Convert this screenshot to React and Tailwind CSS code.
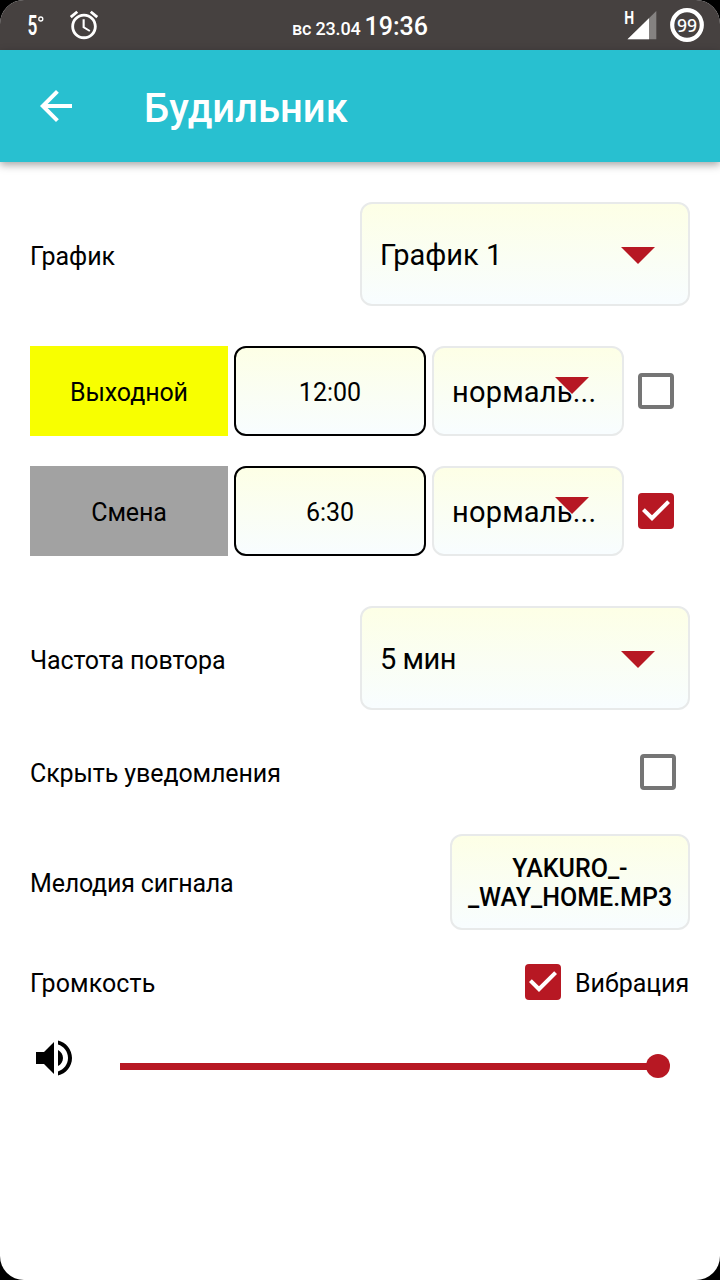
import { useState } from 'react'

const shifts = [
  { id: 1, name: 'Выходной', time: '12:00', mode: 'нормаль...', enabled: false, color: 'bg-[#f8ff00]' },
  { id: 2, name: 'Смена', time: '6:30', mode: 'нормаль...', enabled: true, color: 'bg-[#a2a2a2]' },
]

const panel = 'rounded-xl border-2 border-[#e8eaea] bg-linear-to-b from-[#fdffe6] to-[#f8fdff]'

function Triangle({ className }) {
  return (
    <svg viewBox="0 0 34 17" className={`h-[17px] w-[34px] shrink-0 ${className}`} fill="#b71823">
      <path d="M0 0h34L17 17z" />
    </svg>
  )
}

function Checkbox({ checked, onChange, label }) {
  return (
    <button
      role="checkbox"
      aria-checked={checked}
      aria-label={label}
      onClick={() => onChange(!checked)}
      className={`size-9 shrink-0 rounded-sm ${checked ? 'bg-[#b71823]' : 'border-4 border-[#757575]'}`}
    >
      {checked && (
        <svg viewBox="3 3 18 18" className="size-9" fill="#fff">
          <path d="M10 17l-5-5 1.41-1.41L10 14.17l7.59-7.59L19 8l-9 9z" />
        </svg>
      )}
    </button>
  )
}

function Select({ value, className = '' }) {
  return (
    <button className={`flex h-[104px] w-[330px] items-center justify-between pr-[33px] pl-[18px] text-[29px] ${panel}`}>
      <span className={`pt-1 ${className}`}>{value}</span>
      <Triangle className="mt-[3px]" />
    </button>
  )
}

function StatusBar() {
  return (
    <div className="flex h-[50px] items-center justify-between bg-[#464140] pr-4 pl-7 text-white">
      <div className="flex w-[200px] items-center">
        <svg viewBox="0 0 20 50" className="h-[50px] w-5" fill="#fff">
          <text transform="translate(-0.5 34.5) scale(0.64 1)" fontFamily="Roboto" fontSize="27" fontWeight="600">5</text>
          <circle cx="12.8" cy="19" r="2" fill="none" stroke="#fff" strokeWidth="1.3" />
        </svg>
        <svg viewBox="0 0 24 24" className="ml-[19px] size-[34px]" fill="#fff">
          <path d="M22 5.72l-4.6-3.86-1.29 1.53 4.6 3.86L22 5.72zM7.88 3.39L6.6 1.86 2 5.71l1.29 1.53 4.59-3.85zM12.5 8H11v6l4.75 2.85.75-1.23-4-2.37V8zM12 4c-4.97 0-9 4.03-9 9s4.02 9 9 9c4.97 0 9-4.03 9-9s-4.03-9-9-9zm0 16c-3.87 0-7-3.13-7-7s3.13-7 7-7 7 3.13 7 7-3.13 7-7 7z" />
        </svg>
      </div>
      <div className="flex items-baseline gap-1 pt-1 font-medium whitespace-nowrap">
        <span className="text-lg tracking-[-0.2px]">вс 23.04</span>
        <span className="text-[25px]">19:36</span>
      </div>
      <div className="flex w-[212px] items-center justify-end">
        <svg viewBox="0 0 34 50" className="h-[50px] w-[34px]" fill="#fff">
          <text transform="translate(0.2 24) scale(0.8 1)" fontFamily="Roboto" fontSize="17.5" fontWeight="700">H</text>
          <path d="M3.5 39.3L32.3 11v28.3z" fill="#858281" />
          <path d="M3.5 39.3L25 18.2v21.1z" />
        </svg>
        <svg viewBox="0 0 34 34" className="ml-3 size-[34px]">
          <circle cx="17" cy="17" r="14.8" fill="none" stroke="#fff" strokeWidth="4.2" />
          <text x="17" y="23.5" textAnchor="middle" fill="#fff" fontFamily="Noto Sans" fontSize="17.5" fontWeight="500">99</text>
        </svg>
      </div>
    </div>
  )
}

export default function App() {
  const [rows, setRows] = useState(shifts)
  const [hidden, setHidden] = useState(false)
  const [vibrate, setVibrate] = useState(true)

  const toggleRow = (id, enabled) => {
    setRows(rows.map(r => (r.id === id ? { ...r, enabled } : r)))
  }

  return (
    <div className="h-[1280px] w-[720px] bg-black">
      <div className="h-full overflow-hidden rounded-3xl bg-white font-['Roboto','Noto_Sans',sans-serif] text-[25px] text-black">
        <StatusBar />

        <header className="flex h-28 items-center bg-[#28c0d0] pl-8 text-white shadow-[0_3px_8px_rgba(0,0,0,0.35)]">
          <svg viewBox="0 0 24 24" className="size-12" fill="#fff">
            <path d="M20 11H7.83l5.59-5.59L12 4l-8 8 8 8 1.41-1.41L7.83 13H20v-2z" />
          </svg>
          <h1 className="ml-16 pt-1.5 text-[40px] font-medium">Будильник</h1>
        </header>

        <main className="px-[30px] pt-10">
          <div className="flex items-center justify-between">
            <span className="pt-1.5">График</span>
            <Select value="График 1" />
          </div>

          <div className="mt-10 flex flex-col gap-[30px]">
            {rows.map(row => (
              <div key={row.id} className="flex h-[90px] items-center gap-1.5">
                <div className={`flex h-full w-[198px] items-center justify-center pt-1 tracking-[-0.1px] ${row.color}`}>{row.name}</div>
                <button className="flex h-full w-48 items-center justify-center rounded-xl border-2 border-black bg-linear-to-b from-[#fdffe6] to-[#f8fdff] pt-1">
                  {row.time}
                </button>
                <button className={`relative flex h-full w-48 items-center pt-1 pl-[18px] text-[29px] tracking-[0.2px] ${panel}`}>
                  <span>{row.mode}</span>
                  <Triangle className="absolute top-[29px] left-[121px]" />
                </button>
                <div className="ml-2 flex">
                  <Checkbox checked={row.enabled} onChange={v => toggleRow(row.id, v)} label={row.name} />
                </div>
              </div>
            ))}
          </div>

          <div className="mt-[50px] flex items-center justify-between">
            <span className="pt-1.5 tracking-[-0.12px]">Частота повтора</span>
            <Select value="5 мин" className="tracking-[-0.5px]" />
          </div>

          <div className="mt-11 flex h-9 items-center justify-between pr-3.5">
            <span className="pt-1 tracking-[-0.1px]">Скрыть уведомления</span>
            <Checkbox checked={hidden} onChange={setHidden} label="Скрыть уведомления" />
          </div>

          <div className="mt-11 flex items-center justify-between">
            <span className="pt-1 tracking-[-0.2px]">Мелодия сигнала</span>
            <button className={`h-24 w-60 pt-0.5 text-center leading-[29px] font-medium ${panel}`}>
              YAKURO_-
              <br />
              _WAY_HOME.MP3
            </button>
          </div>

          <div className="mt-[34px] flex h-9 items-center">
            <span className="pt-1 tracking-[0.1px]">Громкость</span>
            <div className="ml-auto flex items-center gap-3.5">
              <Checkbox checked={vibrate} onChange={setVibrate} label="Вибрация" />
              <span className="w-[115px] pt-1 whitespace-nowrap">Вибрация</span>
            </div>
          </div>

          <div className="mt-[34px] flex h-12 items-center">
            <svg viewBox="0 0 24 24" className="size-12 shrink-0">
              <path d="M3 9v6h4l5 5V4L7 9H3zm13.5 3c0-1.77-1.02-3.29-2.5-4.03v8.05c1.48-.73 2.5-2.25 2.5-4.02zM14 3.23v2.06c2.89.86 5 3.54 5 6.71s-2.11 5.85-5 6.71v2.06c4.01-.91 7-4.49 7-8.77s-2.99-7.86-7-8.77z" />
            </svg>
            <div className="mt-4 ml-[42px] flex w-[550px] items-center">
              <div className="h-[7px] grow bg-[#b71823]" />
              <div className="-ml-1 size-6 rounded-full bg-[#b71823]" />
            </div>
          </div>
        </main>
      </div>
    </div>
  )
}
